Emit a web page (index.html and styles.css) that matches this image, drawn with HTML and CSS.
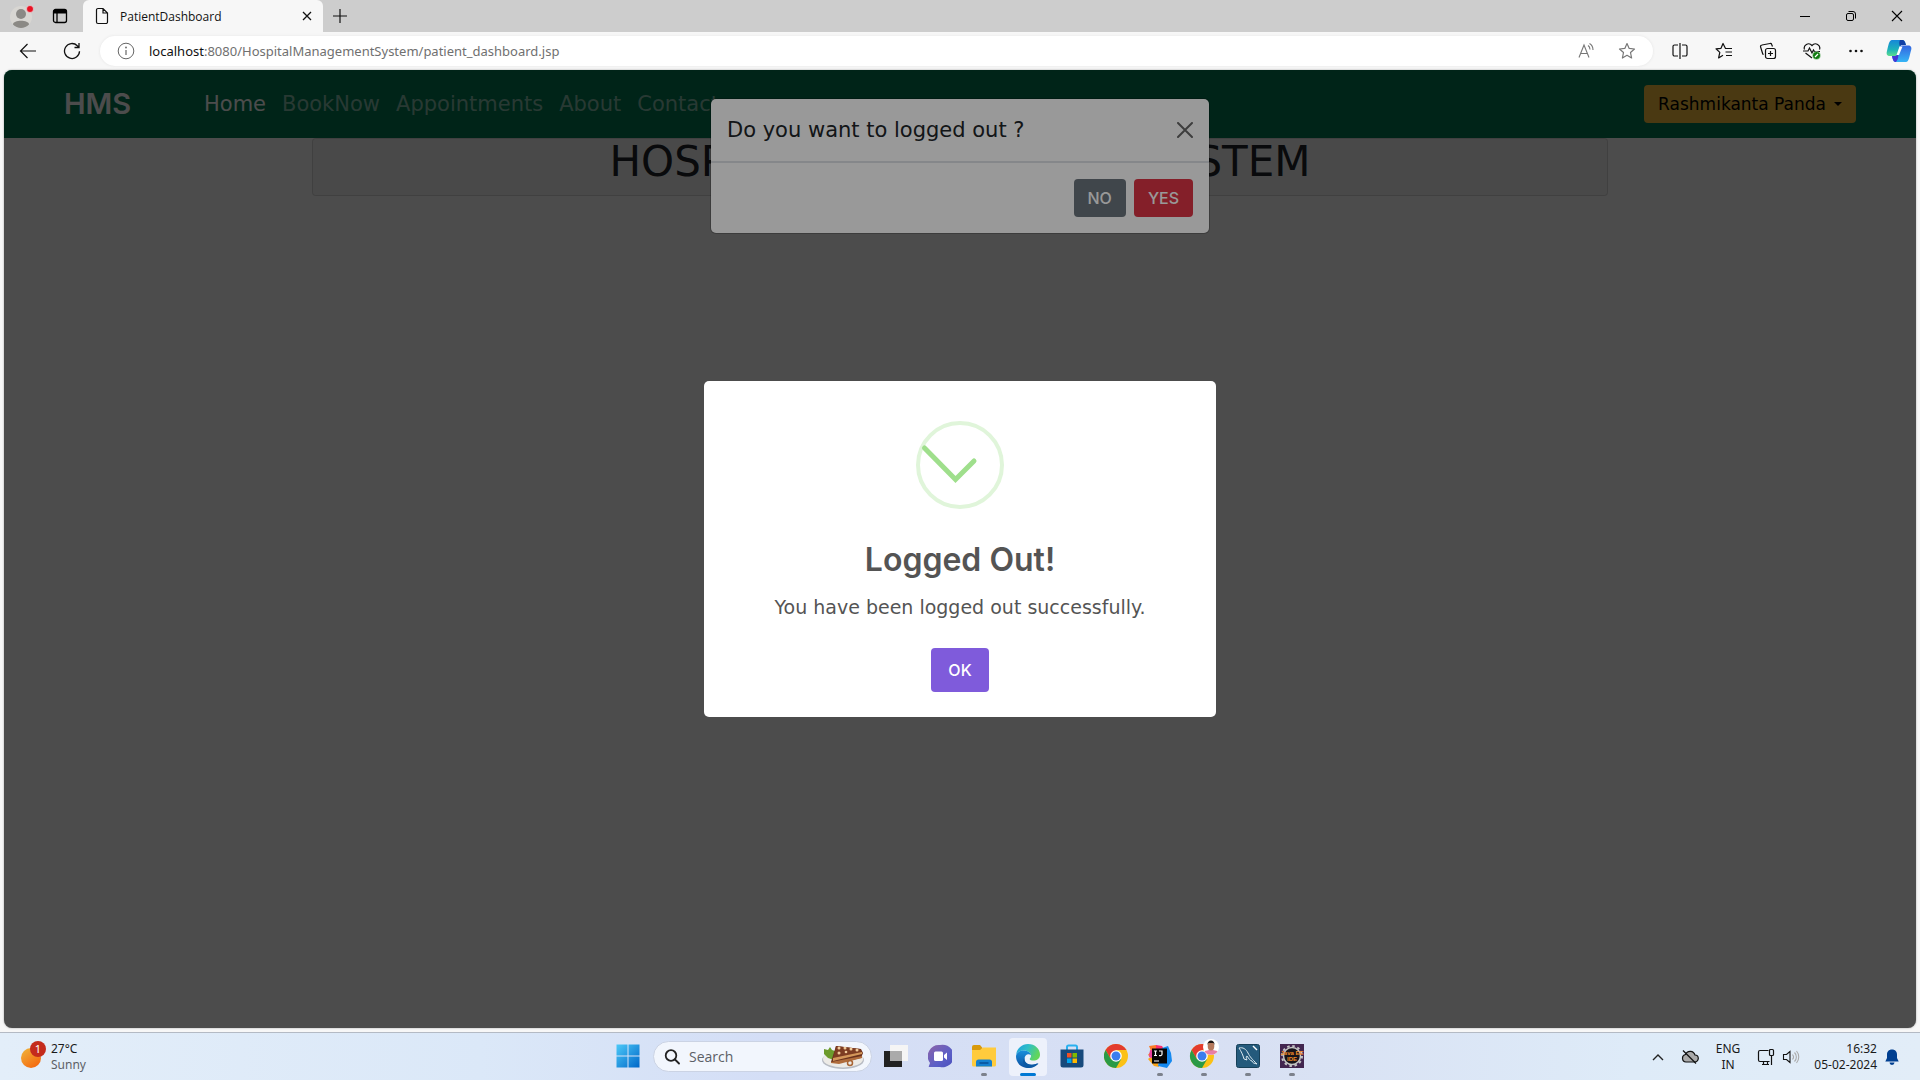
FILE: index.html
```html
<!DOCTYPE html>
<html lang="en">
<head>
<meta charset="utf-8">
<title>PatientDashboard</title>
<link rel="stylesheet" href="styles.css">
</head>
<body>
<header class="tabstrip">
  <button class="tool profile" aria-label="Profile"><svg width="24" height="24" viewBox="0 0 24 24"><circle cx="11" cy="13" r="11" fill="#d8d6d2"/><circle cx="11" cy="10" r="5" fill="#8b8985"/><path d="M3 20.500c0-5 16-5 16 0a11 11 0 0 1-16 0z" fill="#8b8985"/><circle cx="20" cy="5" r="3.500" fill="#e81123" stroke="#eee" stroke-width=".6"/></svg></button>
  <button class="tool actions" aria-label="Tab actions"><svg width="16" height="16" viewBox="0 0 16 16" fill="none" stroke="#000" stroke-width="1.300"><rect x="1.500" y="1.500" width="13" height="13" rx="2"/><path d="M1.500 3h13M1.500 4.500h13" stroke-width="2"/><path d="M5 5v9.500"/></svg></button>
  <div class="tab">
    <svg width="14" height="18" viewBox="0 0 14 18" fill="none" stroke="#111" stroke-width="1.200"><path d="M3 1.500h5l4.500 4.500v9a1.500 1.500 0 0 1-1.500 1.500H3A1.500 1.500 0 0 1 1.500 15V3A1.500 1.500 0 0 1 3 1.500zM8 1.500V6h4.500"/></svg>
    <span class="tab-title">PatientDashboard</span>
    <button class="tool tab-close" aria-label="Close tab"><svg width="10" height="10" viewBox="0 0 10 10" stroke="#111" stroke-width="1.300"><path d="M1 1l8 8M9 1L1 9"/></svg></button>
  </div>
  <button class="tool newtab" aria-label="New tab"><svg width="14" height="14" viewBox="0 0 14 14" stroke="#111" stroke-width="1.200"><path d="M7 0v14M0 7h14"/></svg></button>
  <div class="window-controls">
    <button class="tool" aria-label="Minimize"><svg width="10" height="10" viewBox="0 0 10 10" stroke="#000"><path d="M0 5.500h10"/></svg></button>
    <button class="tool" aria-label="Restore"><svg width="12" height="12" viewBox="0 0 12 12" fill="none" stroke="#000"><rect x="1.500" y="3.500" width="7" height="7" rx="1.500"/><path d="M3.500 1.500H8A2.500 2.500 0 0 1 10.500 4v4.500"/></svg></button>
    <button class="tool" aria-label="Close"><svg width="12" height="12" viewBox="0 0 12 12" stroke="#000" stroke-width="1.100"><path d="M1 1l10 10M11 1L1 11"/></svg></button>
  </div>
</header>

<div class="toolbar">
  <button class="tool" aria-label="Back"><svg width="18" height="16" viewBox="0 0 18 16" fill="none" stroke="#111" stroke-width="1.200"><path d="M17 8H1.500M8.500 1l-7 7 7 7"/></svg></button>
  <button class="tool" aria-label="Refresh"><svg width="18" height="18" viewBox="0 0 18 18" fill="none" stroke="#111" stroke-width="1.300"><path d="M16.500 9.200A7.500 7.500 0 1 1 14.300 3.700L16 5.300M16 1v4.500h-4.500"/></svg></button>
  <div class="address">
    <svg width="18" height="18" viewBox="0 0 18 18" fill="none" stroke="#666"><circle cx="9" cy="9" r="7.800"/><path d="M9 8v5" stroke-width="1.200"/><circle cx="9" cy="5.500" r=".9" fill="#666" stroke="none"/></svg>
    <p class="url"><span class="host">localhost</span>:8080/HospitalManagementSystem/patient_dashboard.jsp</p>
    <button class="tool" aria-label="Read aloud"><svg width="18" height="18" viewBox="0 0 18 18" fill="none" stroke="#777" stroke-width="1.100"><path d="M1 15.500L6 3l5 12.500M2.800 11.500h6.500M10 3.500c1.500 1 2 2.500 2 4M11.500 1.500C14 3 15 5 15 8"/></svg></button>
    <button class="tool" aria-label="Favourite"><svg width="18" height="18" viewBox="0 0 18 18" fill="none" stroke="#777" stroke-width="1.200" stroke-linejoin="round"><path d="M9 1.500l2.200 4.900 5.300.6-4 3.500 1.100 5.500L9 13.300 4.400 16l1.100-5.500-4-3.500 5.300-.6z"/></svg></button>
  </div>
  <button class="tool" aria-label="Split screen"><svg width="18" height="18" viewBox="0 0 18 18" fill="none" stroke="#111" stroke-width="1.200"><path d="M7 3H3.500A1.500 1.500 0 0 0 2 4.500v8A1.500 1.500 0 0 0 3.500 14H7M11 3h3.500A1.500 1.500 0 0 1 16 4.500v8a1.500 1.500 0 0 1-1.500 1.500H11M9 1v16"/></svg></button>
  <button class="tool" aria-label="Favourites"><svg width="18" height="18" viewBox="0 0 18 18" fill="none" stroke="#111" stroke-width="1.200" stroke-linejoin="round"><path d="M10.500 6.500L8 1.500 6 6.300l-5 .5 3.800 3.600L3.600 16 8 13.200M10 6.500h7M10.500 10H17M11 13.500h6"/></svg></button>
  <button class="tool" aria-label="Collections"><svg width="18" height="18" viewBox="0 0 18 18" fill="none" stroke="#111" stroke-width="1.200"><rect x="6.500" y="6.500" width="10" height="10" rx="2"/><path d="M11.500 9v5M9 11.500h5M13.500 4.500l-.8-2a1.500 1.500 0 0 0-1.700-1L3 3A1.500 1.500 0 0 0 1.600 5l2 6.500a1.500 1.500 0 0 0 1 1"/></svg></button>
  <button class="tool" aria-label="Browser essentials"><svg width="20" height="18" viewBox="0 0 20 18" fill="none" stroke="#111" stroke-width="1.200"><path d="M2.500 7.500C1 3.500 6.500-.5 10 3.500c3.500-4 9 0 7.500 4M1 9h5l1.500-3L10 11l1.500-3 1 1.500H18M3.500 11L10 16"/><circle cx="14.500" cy="13.500" r="4" fill="#107c10" stroke="#fff" stroke-width=".5"/><path d="M13 15l3-3" stroke="#fff"/></svg></button>
  <button class="tool" aria-label="Settings and more"><svg width="16" height="16" viewBox="0 0 16 16" fill="#111"><circle cx="2.500" cy="8" r="1.300"/><circle cx="8" cy="8" r="1.300"/><circle cx="13.500" cy="8" r="1.300"/></svg></button>
  <button class="tool copilot" aria-label="Copilot"><svg width="26" height="24" viewBox="0 0 26 24"><defs><linearGradient id="cpa" x1="0" y1="0" x2="0" y2="1"><stop offset="0" stop-color="#1687d9"/><stop offset=".6" stop-color="#1db2b9"/><stop offset="1" stop-color="#5dde8d"/></linearGradient><linearGradient id="cpb" x1="0" y1="1" x2="0" y2="0"><stop offset="0" stop-color="#35b5f5"/><stop offset="1" stop-color="#3464e0"/></linearGradient></defs><path d="M6 1h10c2 0 3 1 4 5h-4c-2 0-2.500 2-4 8-.7 2.500-1.500 3-4 3H4c-3 0-4-2-3-5C2.500 6 3 1 6 1z" fill="url(#cpa)"/><path d="M14 1h2c2 0 3 1 4 5h-4c-1 0-1.500.5-2 1.500C13 5 13 3 14 1z" fill="#123fa5"/><path d="M20 23H10c-2 0-3-1-4-6h3c2 0 2.500-2 4-7.500C14 7 15 6.500 17 6.500h5c3 0 4 2 3 5C23.500 17 23 23 20 23z" fill="url(#cpb)"/><path d="M10 23c-2 0-3-1-4-6h3c1.500 0 2-1 3-3 .5 3 .5 6-2 9z" fill="#4636d6"/><path d="M13.500 7.500h3L13 16h-2.500z" fill="#fff"/></svg></button>
</div>

<main class="viewport">
  <nav class="navbar">
    <a class="brand" href="#">HMS</a>
    <ul class="links">
      <li><a class="active" href="#">Home</a></li>
      <li><a href="#">BookNow</a></li>
      <li><a href="#">Appointments</a></li>
      <li><a href="#">About</a></li>
      <li><a href="#">Contact</a></li>
    </ul>
    <button class="btn user">Rashmikanta Panda</button>
  </nav>
  <section class="card"><h1>HOSPITAL MANAGEMENT SYSTEM</h1></section>

  <div class="backdrop">
    <div class="modal" role="dialog" aria-labelledby="confirm-title">
      <div class="modal-header">
        <h2 id="confirm-title">Do you want to logged out ?</h2>
        <button class="tool" aria-label="Close"><svg width="16" height="16" viewBox="0 0 16 16" stroke="#000" stroke-opacity=".6" stroke-width="2" stroke-linecap="round"><path d="M1 1l14 14M15 1L1 15"/></svg></button>
      </div>
      <div class="modal-footer">
        <button class="btn secondary">NO</button>
        <button class="btn danger">YES</button>
      </div>
    </div>
  </div>

  <div class="alert-layer">
    <div class="alert" role="alertdialog" aria-labelledby="alert-title">
      <svg class="alert-icon" width="88" height="88" viewBox="0 0 88 88" fill="none" stroke-width="4"><circle cx="44" cy="44" r="42" stroke="#e0f5da"/><path d="M8.500 27L39.500 58.500 58 40" stroke="#9fdf8c" stroke-width="5" stroke-linecap="round"/></svg>
      <h2 id="alert-title">Logged Out!</h2>
      <p>You have been logged out successfully.</p>
      <button class="ok">OK</button>
    </div>
  </div>
</main>

<footer class="taskbar">
  <div class="weather">
    <svg width="28" height="32" viewBox="0 0 28 32"><defs><linearGradient id="sun" x1="0" y1="0" x2=".7" y2="1"><stop offset="0" stop-color="#f0b73c"/><stop offset="1" stop-color="#f4690f"/></linearGradient></defs><circle cx="12" cy="17" r="10" fill="url(#sun)"/><circle cx="19" cy="8" r="8" fill="#c42b1c"/><text class="badge-text" x="19" y="12" text-anchor="middle">1</text></svg>
    <p>27°C<br><span class="muted">Sunny</span></p>
  </div>

  <div class="apps">
    <button class="app" aria-label="Start"><svg width="24" height="24" viewBox="0 0 24 24"><defs><linearGradient id="win" x1="0" y1="0" x2="1" y2="1"><stop offset="0" stop-color="#4cc9f8"/><stop offset="1" stop-color="#0067c8"/></linearGradient></defs><path d="M.5.500h11v11H.5zM12.500.5h11v11h-11zM.5 12.500h11v11H.5zM12.500 12.500h11v11h-11z" fill="url(#win)"/></svg></button>
    <label class="search">
      <svg width="16" height="16" viewBox="0 0 16 16" fill="none" stroke="#222" stroke-width="1.800"><circle cx="7" cy="6.500" r="5.300"/><path d="M11 10.500l4 4" stroke-linecap="round"/></svg>
      <input type="text" placeholder="Search" aria-label="Search">
      <svg width="44" height="26" viewBox="0 0 44 26"><ellipse cx="22" cy="16" rx="21" ry="9" fill="#b8bcc4"/><ellipse cx="22" cy="15" rx="20" ry="8.500" fill="#eceae6"/><path d="M3 5l4 1 2-3 2 3 3 1-1 9-6-2-4-4z" fill="#6c9b2c"/><path d="M15 2l25 3 2 4-2 5-22 5-8-1z" fill="#6b321d"/><path d="M15 2l24 3 2 4-29 6z" fill="#7d3c22"/><path d="M12 14l29-6v2l-29 7z" fill="#d4975a"/><path d="M10 18l31-6v2l-23 6-8-1z" fill="#b06c3c"/><g fill="#f1cb9b"><circle cx="18" cy="4" r="1.500"/><circle cx="24" cy="4" r="1.500"/><circle cx="30" cy="5" r="1.500"/><circle cx="36" cy="6" r="1.500"/><circle cx="18" cy="9" r="1.500"/><circle cx="25" cy="8" r="1.300"/></g><circle cx="29" cy="19" r="2.500" fill="none" stroke="#a86434" stroke-width="1.500"/></svg>
    </label>
    <button class="app" aria-label="Task view"><svg width="24" height="24" viewBox="0 0 24 24"><rect y="7" width="18" height="16" fill="#222"/><rect x="6" y="1" width="18" height="16" fill="#f5f5f5"/><path d="M6 7h12v10H6z" fill="#aaa"/></svg></button>
    <button class="app" aria-label="Chat"><svg width="24" height="24" viewBox="0 0 24 24"><defs><linearGradient id="chat" x1="0" y1="0" x2="1" y2="1"><stop offset="0" stop-color="#8e64a8"/><stop offset=".6" stop-color="#5b5fc7"/><stop offset="1" stop-color="#4b50bd"/></linearGradient></defs><path d="M12 1a11.300 11.300 0 1 1 0 22H1.500c-.8 0-1-.5-.5-1.300l1-2.700A11.300 11.300 0 0 1 12 1z" fill="url(#chat)"/><rect x="6" y="7.500" width="9" height="9.500" rx="1.500" fill="#fff"/><path d="M16 11l3-2.500v7.500l-3-2.500z" fill="#fff"/></svg></button>
    <button class="app running" aria-label="File Explorer"><svg width="24" height="24" viewBox="0 0 24 24"><path d="M0 3a2 2 0 0 1 2-2h6l2.500 3L8 7H0z" fill="#d99a0b"/><path d="M0 6h8l3-2.500h13V21a1.500 1.500 0 0 1-1.500 1.500h-21A1.500 1.500 0 0 1 0 21z" fill="#ffcb3d"/><path d="M4 22.500V18a2.500 2.500 0 0 1 2.500-2.500h11A2.500 2.500 0 0 1 20 18v4.500z" fill="#1480cf"/><path d="M7.500 19h9" stroke="#0a5ba5" stroke-width="2"/></svg></button>
    <button class="app current" aria-label="Microsoft Edge"><svg width="24" height="24" viewBox="0 0 24 24"><defs><linearGradient id="edg" x1="0" y1="0" x2="1" y2=".4"><stop offset="0" stop-color="#1b9de2"/><stop offset=".5" stop-color="#2fbfc7"/><stop offset="1" stop-color="#62d65a"/></linearGradient><linearGradient id="edb" x1="0" y1="0" x2="0" y2="1"><stop offset="0" stop-color="#1a8fdc"/><stop offset="1" stop-color="#0c4fa0"/></linearGradient></defs><path d="M0 11C1 4 6 0 12 0c7 0 12 5 12 10.500 0 4-3 6-6.500 6-2 0-3.800-.6-3.800-1.600 0-.7 1.300-1.300 1.300-3C15 9 12 6.500 8 6.500 4 6.500 1 8.500 0 11z" fill="url(#edg)"/><path d="M0 12c.5-3.500 4-5.500 7.500-5.500 4 0 7 2 7.500 4.500-3-2-6.500 0-6.500 4 0 5 7 7.500 13.500 4-2 3-6 5-10 5C5 24 0 19 0 12z" fill="url(#edb)"/><path d="M8.500 14c-1 5 5 9 13 5.500.8-.3 1 .2.500.8-3 3-6.500 3.700-10 3.700-4.500-1-6.500-7-3.500-10z" fill="#0c59a4"/></svg></button>
    <button class="app" aria-label="Microsoft Store"><svg width="24" height="24" viewBox="0 0 24 24"><path d="M7 6V3a1.500 1.500 0 0 1 1.500-1.500h7A1.500 1.500 0 0 1 17 3v3" fill="none" stroke="#29b0ef" stroke-width="2"/><path d="M.5 5.500h23V21a2.500 2.500 0 0 1-2.500 2.500H3A2.500 2.500 0 0 1 .5 21z" fill="#174a7c"/><path d="M7 9h4.500v4.500H7z" fill="#f25022"/><path d="M12.500 9H17v4.500h-4.500z" fill="#7fba00"/><path d="M7 14.500h4.500V19H7z" fill="#00a4ef"/><path d="M12.500 14.500H17V19h-4.500z" fill="#ffb900"/></svg></button>
    <button class="app" aria-label="Chrome"><svg width="24" height="24" viewBox="0 0 24 24"><g id="chrome"><circle cx="12" cy="12" r="12" fill="#fbc116"/><path d="M1.600 6a12 12 0 0 1 20.800 0H12L6.800 15z" fill="#e33b2e"/><path d="M1.600 6A12 12 0 0 0 12 24l5.200-9H6.800z" fill="#2a9a46"/><circle cx="12" cy="12" r="5.800" fill="#fff"/><circle cx="12" cy="12" r="4.500" fill="#3b7ded"/></g></svg></button>
    <button class="app running" aria-label="IntelliJ IDEA"><svg width="24" height="24" viewBox="0 0 24 24"><path d="M1 2l7-1 4 5-8 8-4-3 3-4z" fill="#fc7a25"/><path d="M0 15l8-6 3 14-5-1z" fill="#f9a51a"/><path d="M8 1l6 1 3 5-9 2z" fill="#fb2d6a"/><path d="M14 4l6-2 3 7 1 8-5 7-9-2z" fill="#1589f0"/><path d="M2 6l6 1-2 8-5-2z" fill="#e83fa0"/><rect x="4" y="4.500" width="15" height="15" fill="#050505"/><path d="M6 7h3M7.500 7v4.500M6 11.500h3M11 7h3v3.300c0 1.200-1.500 1.700-3 1.200M6 17h5" fill="none" stroke="#fff" stroke-width="1.200"/></svg></button>
    <button class="app running" aria-label="Chrome, second profile"><svg class="with-avatar" width="30" height="34" viewBox="0 0 30 34"><use href="#chrome" x="1" y="5"/><circle cx="22" cy="8" r="8" fill="#fff"/><path d="M15.500 12.500c2-2 11-2 13 0a8 8 0 0 1-13 0z" fill="#e87fa5"/><ellipse cx="22" cy="7" rx="3.300" ry="4.500" fill="#b5795c"/><path d="M18.500 6c-.5-6 7.500-6 7 0l-1-2h-5z" fill="#1c1614"/></svg></button>
    <button class="app running" aria-label="MySQL Workbench"><svg width="24" height="24" viewBox="0 0 24 24"><rect x=".5" y=".5" width="23" height="23" rx="2" fill="#245a7c" stroke="#174058"/><path d="M3 4c4-1 7 1 9 5s4 6 9 11c-3-1-4-.5-5-3-2-.5-3-2-5-5-1 0-1 2 0 4l-3-1c-1-4-3-8-5-11z" fill="none" stroke="#dce9ef"/><path d="M17 2l4 4" stroke="#fff" stroke-width="1.500"/></svg></button>
    <button class="app running" aria-label="Eclipse Java EE IDE"><svg width="24" height="24" viewBox="0 0 24 24"><rect width="24" height="24" fill="#42264f"/><circle cx="12" cy="12" r="8.500" fill="#17131a" stroke="#c4c4c4" stroke-width="1.500"/><circle cx="12" cy="12" r="10" fill="none" stroke="#c4c4c4" stroke-width="2" stroke-dasharray="2.500 2.740"/><text class="ide-text" x="12" y="11" text-anchor="middle">Java EE</text><text class="ide-text" x="12" y="17" text-anchor="middle">IDE</text></svg></button>
  </div>

  <div class="tray">
    <svg width="12" height="8" viewBox="0 0 12 8" fill="none" stroke="#222" stroke-width="1.400"><path d="M1 7l5-5 5 5"/></svg>
    <svg class="cloud" width="18" height="16" viewBox="0 0 18 16" fill="#aaa" stroke="#111" stroke-width="1.200"><path d="M5 13a3.800 3.800 0 0 1-.5-7.500A5 5 0 0 1 14 6a3.500 3.500 0 0 1-.5 7z"/><path d="M2 1.500l13 13"/></svg>
    <p class="lang">ENG<br>IN</p>
    <svg class="net" width="18" height="18" viewBox="0 0 18 18" fill="none" stroke="#111" stroke-width="1.200"><path d="M11.500 2.500H3A1.500 1.500 0 0 0 1.500 4v8A1.500 1.500 0 0 0 3 13.500h9.500M5 16.500h7M6.500 13.500v3M10.500 13.500v3M14.500 8v9"/><rect x="12.500" y="1.500" width="4" height="6" rx="1"/></svg>
    <svg class="sound" width="18" height="16" viewBox="0 0 18 16" fill="none" stroke="#111" stroke-width="1.100"><path d="M1.500 5.500h3L8 2.500v11l-3.500-3h-3z"/><path d="M10.500 5.500c1.300 1.500 1.300 3.500 0 5M12.500 3.500c2.500 2.500 2.500 6.500 0 9M14.500 2c3 3.500 3 8.500 0 12" stroke="#aaa"/></svg>
    <p class="clock">16:32<br>05-02-2024</p>
    <svg width="14" height="16" viewBox="0 0 14 16" fill="#003f91"><path d="M7 .5c3.300 0 5 2.300 5 5V9l1.700 3.500H.3L2 9V5.500c0-2.700 1.700-5 5-5zM4.500 13.500h5a2.500 2.500 0 0 1-5 0z"/></svg>
  </div>
</footer>
</body>
</html>
```
FILE: styles.css
```css
* { box-sizing: border-box; }

body {
  margin: 0;
  height: 100vh;
  display: flex;
  flex-direction: column;
  overflow: hidden;
  background: #f7f7f7;
  color: #212529;
  font-family: "DejaVu Sans", sans-serif;
}

h1, h2, p, ul { margin: 0; padding: 0; font-weight: 400; }
ul { list-style: none; }
a { color: inherit; text-decoration: none; }
button { font-family: inherit; cursor: pointer; }
svg { flex: none; }

.tool {
  display: flex;
  align-items: center;
  justify-content: center;
  flex: none;
  width: 44px;
  height: 32px;
  padding: 0;
  border: 0;
  background: none;
}

/* Browser chrome */
.tabstrip {
  display: flex;
  flex: none;
  height: 32px;
  background: #cdcdcd;
  font-family: "Open Sans", sans-serif;
}
.actions { width: 32px; }
.tab {
  display: flex;
  align-items: center;
  gap: 11px;
  width: 240px;
  margin-left: 7px;
  padding: 0 4px 0 12px;
  border-radius: 6px 6px 0 0;
  background: #f7f7f7;
}
.tab-title { flex: 1; font-size: 12px; color: #111; }
.tab-close { width: 24px; }
.newtab { width: 34px; }
.window-controls { display: flex; margin-left: auto; }
.window-controls .tool { width: 46px; }

.toolbar {
  display: flex;
  align-items: center;
  flex: none;
  height: 38px;
  padding-left: 6px;
  font-family: "Noto Sans", sans-serif;
}
.toolbar .copilot { width: 42px; }
.address {
  display: flex;
  align-items: center;
  flex: 1;
  height: 30px;
  margin: 0 5px 0 6px;
  padding: 0 6px 0 17px;
  border-radius: 15px;
  background: #fff;
  box-shadow: 0 0 3px #e4e4e4;
}
.address .tool { width: 40px; }
.url { flex: 1; margin-left: 14px; font-size: 13px; color: #707070; }
.host { color: #111; }

/* Page */
.viewport {
  position: relative;
  flex: 1;
  margin: 0 4px 4px;
  border-radius: 8px;
  overflow: hidden;
  background: #fff;
  box-shadow: 0 0 2px #999;
}
.navbar {
  display: flex;
  align-items: center;
  height: 68px;
  padding: 0 60px;
  background: #007850;
  color: #fff;
}
.brand {
  width: 140px;
  font: 600 29px/36px "Inter", sans-serif;
}
.links {
  display: flex;
  flex: 1;
  gap: 16px;
  font-size: 21px;
  line-height: 26px;
  color: rgba(255, 255, 255, .55);
}
.links .active { color: #fff; }

.btn {
  height: 38px;
  padding: 0 14px;
  border: 0;
  border-radius: 4px;
  color: #fff;
  font: 500 16px "Inter", sans-serif;
}
.user {
  display: flex;
  align-items: center;
  gap: 8px;
  background: #f9c13c;
  color: #000;
  font: 17px "DejaVu Sans", sans-serif;
}
.user::after {
  content: "";
  border: 4px solid transparent;
  border-top-color: #000;
  border-bottom: 0;
}

.card {
  width: calc(100% - 616px);
  height: 58px;
  margin: 0 auto;
  border: 1px solid rgba(0, 0, 0, .12);
  border-radius: 4px;
  background: #f7f7f7;
  text-align: center;
}
h1 { font-size: 42px; line-height: 45px; }

.backdrop, .alert-layer { position: absolute; inset: 0; }
.backdrop { padding-top: 29px; background: rgba(0, 0, 0, .5); }
.modal {
  width: 498px;
  margin: 0 auto;
  border-radius: 5px;
  background: #fff;
  box-shadow: 0 0 0 1px rgba(0, 0, 0, .2);
}
.modal-header {
  display: flex;
  align-items: center;
  justify-content: space-between;
  height: 64px;
  padding: 0 2px 0 16px;
  border-bottom: 2px solid #dee2e6;
}
.modal-header h2 { font-size: 21px; line-height: 30px; }
.modal-footer {
  display: flex;
  justify-content: flex-end;
  gap: 8px;
  padding: 16px;
}
.secondary { background: #6c757d; }
.danger { background: #dc3545; }

.alert-layer {
  display: flex;
  align-items: center;
  justify-content: center;
  background: rgba(0, 0, 0, .4);
}
.alert {
  display: flex;
  flex-direction: column;
  align-items: center;
  width: 512px;
  padding: 40px 20px 25px;
  border-radius: 5px;
  background: #fff;
  color: #545454;
}
.alert h2 {
  margin-top: 28px;
  font: 600 32px/46px "Inter", sans-serif;
}
.alert p { margin-top: 8px; font-size: 19px; line-height: 32px; }
.ok {
  height: 44px;
  margin-top: 25px;
  padding: 0 17px;
  border: 0;
  border-radius: 4px;
  background: #7f5bdb;
  color: #fff;
  font: 500 16px "Inter", sans-serif;
}

/* Taskbar */
.taskbar {
  display: grid;
  grid-template-columns: 1fr auto 1fr;
  align-items: center;
  flex: none;
  height: 48px;
  border-top: 1px solid #b4bac4;
  background: linear-gradient(90deg, #e3eef9, #dbe8f8 25%, #d4def6 40%, #d8e0f3 65%, #deebf8 85%, #e2edf8);
  font: 12px/16px "Noto Sans", sans-serif;
  color: #1a1a1a;
}
.weather { display: flex; align-items: center; gap: 4px; padding-left: 19px; }
.muted { color: #5c6066; }
.badge-text { font-size: 11px; fill: #fff; }
.apps { display: flex; align-items: center; }
.app {
  display: flex;
  position: relative;
  align-items: center;
  justify-content: center;
  width: 38px;
  height: 38px;
  margin: 0 3px;
  padding: 0 0 2px;
  border: 0;
  border-radius: 4px;
  background: none;
}
.app.current { background: #edf1fb; }
.app.running::after, .app.current::after {
  content: "";
  position: absolute;
  bottom: 0;
  width: 6px;
  height: 3px;
  border-radius: 2px;
  background: #7c818c;
}
.app.current::after { width: 16px; background: #0078d4; }
.search {
  display: flex;
  align-items: center;
  width: 219px;
  height: 31px;
  margin: 0 2px 0 3px;
  padding: 0 6px 0 10px;
  border: 1px solid #cbd3e4;
  border-radius: 16px;
  background: #f2f6fd;
}
.search input {
  flex: 1;
  min-width: 0;
  margin-left: 9px;
  padding: 0;
  border: 0;
  background: none;
  font: 14px "Open Sans", sans-serif;
}
.search input::placeholder { color: #5c6066; opacity: 1; }
.ide-text { font: 700 6px "Liberation Sans", sans-serif; fill: #f28c28; }
.tray {
  display: flex;
  align-items: center;
  justify-content: flex-end;
  padding-right: 21px;
}
.cloud { margin: 0 17px; }
.lang { text-align: center; }
.net { margin-left: 17px; }
.sound { margin: 0 14px 0 7px; }
.clock { margin-right: 8px; text-align: right; }
```
